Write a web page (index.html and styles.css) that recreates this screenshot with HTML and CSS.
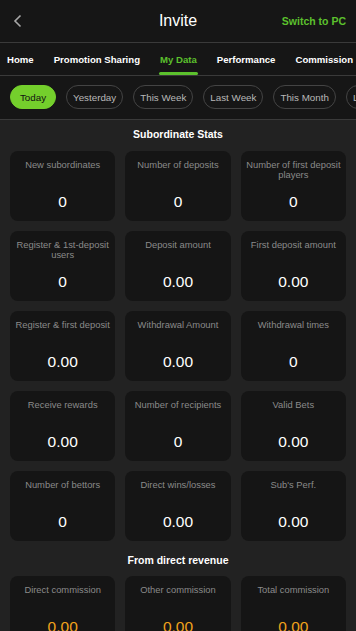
FILE: index.html
```html
<!DOCTYPE html>
<html lang="en">
<head>
  <meta charset="UTF-8" />
  <meta name="viewport" content="width=device-width, initial-scale=1.0"/>
  <title>Invite - My Data</title>
  <link rel="stylesheet" href="styles.css">
</head>
<body>
  <div class="page">
    <header class="topbar">
      <a href="#" class="back">
        <svg width="10" height="14" viewBox="0 0 10 14"><polyline points="7.5,1.5 2,7 7.5,12.5" fill="none" stroke="#a8a8a8" stroke-width="1.6"/></svg>
      </a>
      <h1>Invite</h1>
      <a href="#" class="switch">Switch to PC</a>
    </header>

    <nav class="tabs">
      <a href="#">Home</a>
      <a href="#">Promotion Sharing</a>
      <a href="#" class="active">My Data</a>
      <a href="#">Performance</a>
      <a href="#">Commission</a>
    </nav>

    <div class="filters">
      <button class="pill active">Today</button>
      <button class="pill">Yesterday</button>
      <button class="pill">This Week</button>
      <button class="pill">Last Week</button>
      <button class="pill">This Month</button>
      <button class="pill">Last Month</button>
    </div>

    <main class="content">
      <h2 class="section-title">Subordinate Stats</h2>
      <div class="grid">
        <div class="card"><span class="label">New subordinates</span><span class="value">0</span></div>
        <div class="card"><span class="label">Number of deposits</span><span class="value">0</span></div>
        <div class="card"><span class="label">Number of first deposit players</span><span class="value">0</span></div>

        <div class="card"><span class="label">Register &amp; 1st-deposit users</span><span class="value">0</span></div>
        <div class="card"><span class="label">Deposit amount</span><span class="value">0.00</span></div>
        <div class="card"><span class="label">First deposit amount</span><span class="value">0.00</span></div>

        <div class="card"><span class="label">Register &amp; first deposit</span><span class="value">0.00</span></div>
        <div class="card"><span class="label">Withdrawal Amount</span><span class="value">0.00</span></div>
        <div class="card"><span class="label">Withdrawal times</span><span class="value">0</span></div>

        <div class="card"><span class="label">Receive rewards</span><span class="value">0.00</span></div>
        <div class="card"><span class="label">Number of recipients</span><span class="value">0</span></div>
        <div class="card"><span class="label">Valid Bets</span><span class="value">0.00</span></div>

        <div class="card"><span class="label">Number of bettors</span><span class="value">0</span></div>
        <div class="card"><span class="label">Direct wins/losses</span><span class="value">0.00</span></div>
        <div class="card"><span class="label">Sub's Perf.</span><span class="value">0.00</span></div>
      </div>

      <h2 class="section-title second">From direct revenue</h2>
      <div class="grid">
        <div class="card"><span class="label">Direct commission</span><span class="value money">0.00</span></div>
        <div class="card"><span class="label">Other commission</span><span class="value money">0.00</span></div>
        <div class="card"><span class="label">Total commission</span><span class="value money">0.00</span></div>
      </div>
    </main>
  </div>
</body>
</html>
```

FILE: styles.css
```css
:root {
  --bar: #161616;
  --bg: #222222;
  --card: #151515;
  --line: #3a3a3a;
  --green: #5cc12d;
  --lime: #74cf2c;
  --muted: #8a8a8a;
  --orange: #f0a21c;
}

* {
  box-sizing: border-box;
}

body {
  margin: 0;
  font-family: 'Liberation Sans', Arial, sans-serif;
  background: var(--bg);
  color: white;
}

.page {
  min-height: 100vh;
  overflow: hidden;
}

.topbar {
  height: 43px;
  background: var(--bar);
  border-bottom: 1px solid var(--line);
  display: flex;
  align-items: center;
  justify-content: space-between;
  padding: 0 10px 0 11px;
  position: relative;
}

.topbar h1 {
  position: absolute;
  left: 0;
  right: 0;
  margin: 0;
  text-align: center;
  font-size: 16px;
  font-weight: normal;
  pointer-events: none;
}

.back {
  display: flex;
  padding: 2px;
}

.switch {
  color: var(--green);
  text-decoration: none;
  font-size: 10.5px;
  font-weight: bold;
}

.tabs {
  height: 33px;
  background: var(--bar);
  border-bottom: 1px solid var(--line);
  display: flex;
  gap: 20px;
  padding-left: 7px;
  white-space: nowrap;
}

.tabs a {
  color: white;
  text-decoration: none;
  font-size: 9.6px;
  font-weight: bold;
  display: flex;
  align-items: center;
  position: relative;
}

.tabs a.active {
  color: var(--green);
}

.tabs a.active::after {
  content: "";
  position: absolute;
  left: -1px;
  right: -1px;
  bottom: 0;
  height: 3px;
  border-radius: 2px;
  background: var(--green);
}

.filters {
  background: var(--bar);
  border-bottom: 1px solid var(--line);
  display: flex;
  gap: 10px;
  padding: 9px 10px 10px;
  white-space: nowrap;
  overflow: hidden;
}

.pill {
  flex: none;
  height: 24px;
  min-width: 46px;
  padding: 0 6px;
  border-radius: 12px;
  border: 1px solid #444;
  background: transparent;
  color: #b8b8b8;
  font-family: inherit;
  font-size: 9.8px;
}

.pill.active {
  background: var(--lime);
  border-color: var(--lime);
  color: #111;
}

.content {
  padding: 0 10px 20px;
}

.section-title {
  margin: 0;
  padding: 8px 0 10px;
  text-align: center;
  font-size: 10.5px;
  line-height: 13px;
  font-weight: bold;
}

.section-title.second {
  padding: 13px 0 9px;
}

.grid {
  display: grid;
  grid-template-columns: repeat(3, 1fr);
  gap: 10px;
}

.card {
  height: 70px;
  background: var(--card);
  border-radius: 8px;
  padding: 9px 4px 9px;
  display: flex;
  flex-direction: column;
  align-items: center;
  text-align: center;
}

.label {
  color: var(--muted);
  font-size: 9.4px;
  line-height: 10px;
}

.value {
  margin-top: auto;
  font-size: 15.5px;
  line-height: 20px;
}

.value.money {
  color: var(--orange);
}
```
